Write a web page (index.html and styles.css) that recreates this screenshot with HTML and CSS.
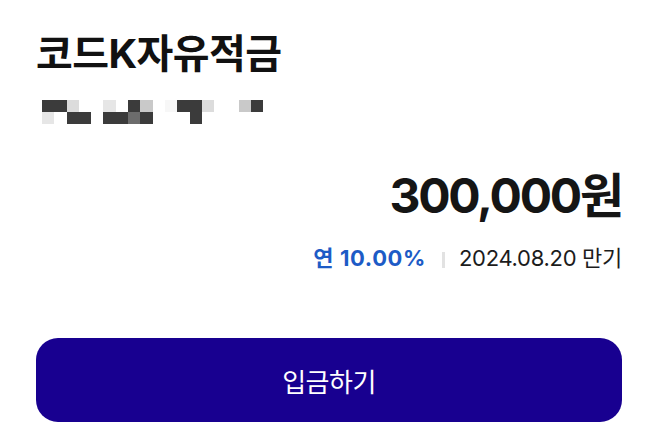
FILE: index.html
```html
<!DOCTYPE html>
<html lang="ko">
<head>
<meta charset="utf-8">
<title>코드K자유적금</title>
<link rel="stylesheet" href="styles.css">
</head>
<body>
<main class="page">
  <h1 class="title">코드K자유적금</h1>
  <div class="mask" aria-label="계좌번호 가림">
    <span class="d"></span><span class="d"></span><span class="l"></span><span></span><span></span><span class="l2"></span><span></span><span class="d"></span><span class="g"></span><span></span><span class="f"></span><span class="d"></span><span class="d"></span><span class="l"></span><span></span><span></span><span class="g"></span><span class="d"></span>
    <span class="l2"></span><span></span><span class="d"></span><span class="d"></span><span></span><span class="d"></span><span class="d"></span><span class="m"></span><span class="d"></span><span></span><span></span><span></span><span class="d"></span><span></span><span></span><span></span><span></span><span></span>
  </div>
  <div class="amount">300,000원</div>
  <div class="info">
    <span class="rate">연 10.00%</span>
    <span class="sep"></span>
    <span class="date">2024.08.20 만기</span>
  </div>
  <button class="deposit" type="button">입금하기</button>
</main>
</body>
</html>
```

FILE: styles.css
```css
html, body {
  margin: 0;
  padding: 0;
  background: #ffffff;
}

body {
  font-family: "Inter", "Noto Sans CJK KR", sans-serif;
  color: #111111;
}

.page {
  display: flex;
  flex-direction: column;
  padding: 0 36px;
}

.title {
  margin: 30px 0 0;
  font-size: 40px;
  line-height: 48px;
  font-weight: 700;
  letter-spacing: -0.6px;
  color: #111111;
}

.mask {
  margin: 22px 0 0 6px;
  display: grid;
  grid-template-columns: repeat(18, 12.3px);
  grid-template-rows: 12px 12px;
}

.mask span { background: transparent; }
.mask .d { background: #3b3b3b; }
.mask .m { background: #6c6c6c; }
.mask .g { background: #c9c9c9; }
.mask .l { background: #dcdcdc; }
.mask .l2 { background: #e6e6e6; }
.mask .f { background: #f7f7f7; }

.amount {
  margin-top: 44px;
  text-align: right;
  font-size: 48px;
  line-height: 56px;
  font-weight: 700;
  letter-spacing: -2.2px;
  color: #151515;
}

.info {
  margin-top: 20px;
  display: flex;
  justify-content: flex-end;
  align-items: center;
  font-size: 22px;
  line-height: 28px;
}

.rate {
  color: #1d5bc6;
  font-weight: 700;
  letter-spacing: 0.6px;
}

.sep {
  width: 3px;
  height: 16px;
  background: #e2e2e2;
  margin: 4px 14px 0 16px;
}

.date {
  color: #1c1c1c;
  font-weight: 400;
  letter-spacing: -0.3px;
}

.deposit {
  margin-top: 66px;
  height: 84px;
  width: 100%;
  border: none;
  border-radius: 22px;
  background: #180090;
  color: #ffffff;
  font-family: "Noto Sans CJK KR", sans-serif;
  font-size: 26px;
  font-weight: 400;
  letter-spacing: -0.5px;
  cursor: pointer;
}
```
